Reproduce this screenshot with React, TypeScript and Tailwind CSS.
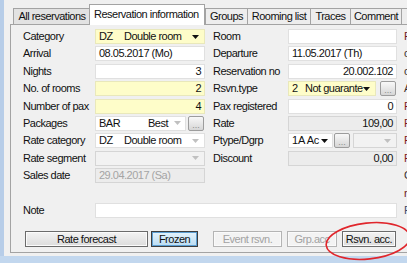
import React from "react";

type Tone = "white" | "yellow" | "gray";

const toneCls: Record<Tone, string> = {
  white: "bg-white border-[#e0e0e0]",
  yellow: "bg-[#fefdc9] border-[#e9e8bb]",
  gray: "bg-[#ececec] border-[#d5d5d5]",
};

function Box({
  tone = "white",
  right,
  className = "",
  children,
}: {
  tone?: Tone;
  right?: boolean;
  className?: string;
  children?: React.ReactNode;
}) {
  return (
    <div
      className={`h-[15px] border flex items-center px-[3px] overflow-hidden whitespace-nowrap leading-[13px] ${toneCls[tone]} ${right ? "justify-end" : ""} ${className}`}
    >
      {children}
    </div>
  );
}

function Arrow({ dim }: { dim?: boolean }) {
  return (
    <svg width="7" height="4" viewBox="0 0 7 4" className="shrink-0 ml-auto">
      <path d="M0 0h7L3.5 4z" fill={dim ? "#c0c0c0" : "#111"} />
    </svg>
  );
}

function Dots({ className = "" }: { className?: string }) {
  return (
    <div
      className={`h-[15px] w-[16px] shrink-0 border border-[#9c9c9c] rounded-[2px] bg-gradient-to-b from-[#f8f8f8] to-[#d6d6d6] flex items-end justify-center pb-[1px] text-[9px] leading-[8px] tracking-normal text-[#8c8c8c] ${className}`}
    >
      ...
    </div>
  );
}

function Row({
  label,
  lw,
  children,
}: {
  label: string;
  lw: string;
  children: React.ReactNode;
}) {
  return (
    <div className="h-[17.4px] flex shrink-0">
      <div className={`${lw} leading-[15px] shrink-0`}>{label}</div>
      {children}
    </div>
  );
}

function Tab({
  w,
  active,
  gray,
  children,
}: {
  w: string;
  active?: boolean;
  gray?: boolean;
  children?: React.ReactNode;
}) {
  if (active)
    return (
      <div
        className={`${w} h-[21px] -mb-px relative z-10 bg-white border border-b-0 border-[#a3a3a3] flex items-center pl-[4px] pb-[2px] shrink-0`}
      >
        {children}
      </div>
    );
  return (
    <div
      className={`${w} h-[16px] border-t border-l border-[#a3a3a3] ${gray ? "bg-[#e2e2e2]" : "bg-[#ededed]"} flex items-center justify-center shrink-0`}
    >
      {children}
    </div>
  );
}

function Btn({
  w,
  kind = "normal",
  className = "",
  children,
}: {
  w: string;
  kind?: "normal" | "blue" | "off";
  className?: string;
  children: React.ReactNode;
}) {
  const k =
    kind === "blue"
      ? "border-[#3d3d3d] bg-gradient-to-b from-[#e4f3fc] to-[#b9dcf3] shadow-[inset_0_0_0_1px_#5d9fd3] text-[#111]"
      : kind === "off"
        ? "border-[#b4b4b4] bg-[#f3f3f3] shadow-[inset_0_0_0_1px_#fafafa] text-[#a2a2a2]"
        : "border-[#6b6b6b] bg-gradient-to-b from-[#f3f3f3] to-[#dcdcdc] shadow-[inset_0_0_0_1px_#fbfbfb] text-[#111]";
  return (
    <div
      className={`${w} h-[16px] border flex items-center justify-center leading-[14px] shrink-0 overflow-hidden whitespace-nowrap ${k} ${className}`}
    >
      {children}
    </div>
  );
}

const third: [string, string][] = [
  ["Firma", "text-[#6e2020]"],
  ["cont", "text-[#3a3030]"],
  ["comp", "text-[#3a3030]"],
  ["Agent", "text-[#3a2828]"],
  ["Fax", "text-[#7e1c1c]"],
  ["Fax", "text-[#7e1c1c]"],
  ["Fax", "text-[#7e1c1c]"],
  ["Fax", "text-[#7e1c1c]"],
  ["Code", "text-[#3a3030]"],
  ["rYes", "text-[#6e2020]"],
  ["Fix", "text-[#3b4a6a]"],
];

export default function App() {
  return (
    <div className="w-[407px] h-[263px] relative overflow-hidden flex flex-col bg-[#f0f0f0] text-[11px] tracking-[-0.5px] text-[#111] font-['Liberation_Sans',Arial,sans-serif]">
      <div className="flex-1 flex min-h-0">
        <div className="w-[4px] shrink-0 bg-[#b7cde8]" />
        <div className="flex-1 pl-[6px] pt-[4px] min-w-0">
          {/* tabs */}
          <div className="flex items-end h-[20px] ml-[3px]">
            <Tab w="w-[77px]" gray>
              All reservations
            </Tab>
            <Tab w="w-[116px] -ml-px" active>
              Reservation information
            </Tab>
            <Tab w="w-[42px]">Groups</Tab>
            <Tab w="w-[63px]">Rooming list</Tab>
            <Tab w="w-[40px]">Traces</Tab>
            <Tab w="w-[51px]">Comment</Tab>
            <Tab w="w-[40px]" />
          </div>

          {/* panel */}
          <div className="w-[440px] border border-r-0 border-[#a3a3a3] pt-[4px] pb-[5px] pl-[12px] flex flex-col">
            <div className="h-[174px] flex">
              {/* left column */}
              <div className="w-[182px] flex flex-col shrink-0">
                <Row label="Category" lw="w-[72px]">
                  <Box tone="yellow" className="w-[110px] pr-[5px]">
                    <span className="w-[25px]">DZ</span>
                    <span>Double room</span>
                    <Arrow />
                  </Box>
                </Row>
                <Row label="Arrival" lw="w-[72px]">
                  <Box className="w-[110px]">08.05.2017 (Mo)</Box>
                </Row>
                <Row label="Nights" lw="w-[72px]">
                  <Box className="w-[110px]" right>
                    3
                  </Box>
                </Row>
                <Row label="No. of rooms" lw="w-[72px]">
                  <Box tone="yellow" className="w-[110px]" right>
                    2
                  </Box>
                </Row>
                <Row label="Number of pax" lw="w-[72px]">
                  <Box tone="yellow" className="w-[110px]" right>
                    4
                  </Box>
                </Row>
                <Row label="Packages" lw="w-[72px]">
                  <Box className="w-[91px] pr-[4px]">
                    <span className="w-[49px]">BAR</span>
                    <span>Best</span>
                    <Arrow dim />
                  </Box>
                  <Dots className="ml-[2px]" />
                </Row>
                <Row label="Rate category" lw="w-[72px]">
                  <Box className="w-[110px] pr-[5px]">
                    <span className="w-[25px]">DZ</span>
                    <span>Double room</span>
                    <Arrow dim />
                  </Box>
                </Row>
                <Row label="Rate segment" lw="w-[72px]">
                  <Box tone="gray" className="w-[110px] pr-[5px] bg-[#f2f2f2]">
                    <Arrow dim />
                  </Box>
                </Row>
                <Row label="Sales date" lw="w-[72px]">
                  <Box tone="gray" className="w-[110px] text-[#a4a4a4]">
                    29.04.2017 (Sa)
                  </Box>
                </Row>
              </div>

              {/* right column */}
              <div className="w-[184px] ml-[8px] flex flex-col shrink-0">
                <Row label="Room" lw="w-[75px]">
                  <Box className="w-[109px]" />
                </Row>
                <Row label="Departure" lw="w-[75px]">
                  <Box className="w-[109px]">11.05.2017 (Th)</Box>
                </Row>
                <Row label="Reservation no" lw="w-[75px]">
                  <Box className="w-[109px]" right>
                    20.002.102
                  </Box>
                </Row>
                <Row label="Rsvn.type" lw="w-[75px]">
                  <Box tone="yellow" className="w-[88px] pr-[5px]">
                    <span className="w-[13px]">2</span>
                    <span>Not guarante</span>
                    <Arrow />
                  </Box>
                  <Dots className="ml-[4px]" />
                </Row>
                <Row label="Pax registered" lw="w-[75px]">
                  <Box className="w-[109px]" right>
                    0
                  </Box>
                </Row>
                <Row label="Rate" lw="w-[75px]">
                  <Box tone="gray" className="w-[109px]" right>
                    109,00
                  </Box>
                </Row>
                <Row label="Ptype/Dgrp" lw="w-[75px]">
                  <Box className="w-[45px] pr-[4px]">
                    <span className="w-[29px] overflow-hidden tracking-[-0.2px]">1A Ac</span>
                    <Arrow />
                  </Box>
                  <Dots className="ml-[1px]" />
                  <Box tone="gray" className="w-[44px] ml-[3px] pr-[5px] bg-[#f2f2f2]">
                    <Arrow dim />
                  </Box>
                </Row>
                <Row label="Discount" lw="w-[75px]">
                  <Box tone="gray" className="w-[109px]" right>
                    0,00
                  </Box>
                </Row>
              </div>

              {/* cut-off third column */}
              <div className="ml-[7px] flex flex-col shrink-0">
                {third.map(([t, c], i) => (
                  <div key={i} className={`h-[17.4px] leading-[15px] shrink-0 ${c}`}>
                    {t}
                  </div>
                ))}
              </div>
            </div>

            {/* note */}
            <div className="h-[15px] flex">
              <div className="w-[72px] leading-[15px] shrink-0">Note</div>
              <Box className="w-[302px]" />
            </div>

            {/* buttons */}
            <div className="flex items-center mt-[13px] ml-[2px]">
              <Btn w="w-[123px]">Rate forecast</Btn>
              <Btn w="w-[47px]" kind="blue" className="ml-[3px]">
                Frozen
              </Btn>
              <Btn w="w-[69px]" kind="off" className="ml-[15px]">
                Event rsvn.
              </Btn>
              <Btn w="w-[50px]" kind="off" className="ml-[5px]">
                Grp.acc
              </Btn>
              <Btn w="w-[54px]" className="ml-[5px]">
                Rsvn. acc.
              </Btn>
            </div>
          </div>
        </div>
      </div>
      <div className="h-[7px] shrink-0 bg-[#c2d7ee]" />

      {/* red annotation */}
      <svg
        className="absolute inset-0 pointer-events-none"
        width="407"
        height="263"
        viewBox="0 0 407 263"
      >
        <ellipse
          cx="368"
          cy="241"
          rx="42"
          ry="18"
          transform="rotate(-6 368 241)"
          fill="none"
          stroke="#e0262c"
          strokeWidth="1.6"
        />
      </svg>
    </div>
  );
}
